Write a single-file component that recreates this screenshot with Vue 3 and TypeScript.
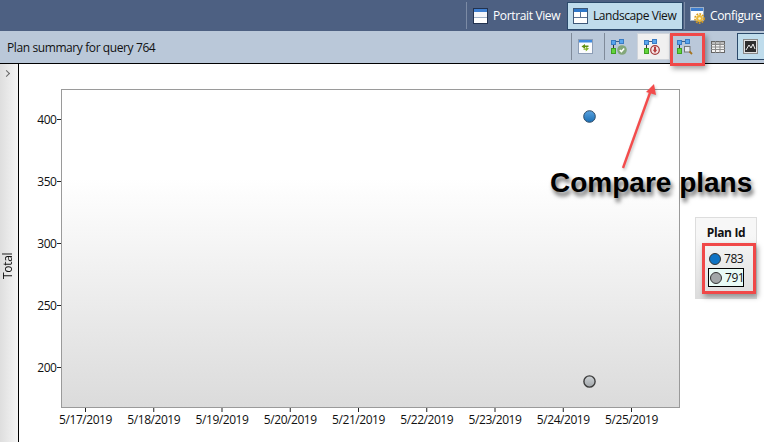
<script setup lang="ts">
const yTicks = [
  { label: '400', y: 119 },
  { label: '350', y: 181 },
  { label: '300', y: 243 },
  { label: '250', y: 305 },
  { label: '200', y: 367 },
]
const days = ['5/17/2019', '5/18/2019', '5/19/2019', '5/20/2019', '5/21/2019', '5/22/2019', '5/23/2019', '5/24/2019', '5/25/2019']
const xTicks = days.map((label, i) => ({ label, x: 85.5 + i * 68.25 }))
</script>

<template>
  <div class="page">
    <div class="window">
      <header class="topbar">
        <span class="sep"></span>
        <button class="tab portrait">
          <svg width="15" height="16" viewBox="0 0 15 16"><rect x="0.5" y="0.5" width="14" height="15" fill="#fff" stroke="#22324f"/><rect x="1" y="1" width="13" height="3" fill="#3f7fd0"/><rect x="1" y="4" width="13" height="5" fill="#f4f6fa"/><line x1="1" y1="9.5" x2="14" y2="9.5" stroke="#9fb0c6"/></svg>
          <span>Portrait View</span>
        </button>
        <button class="tab active">
          <svg width="15" height="16" viewBox="0 0 15 16"><rect x="0.5" y="0.5" width="14" height="15" fill="#fff" stroke="#3e5878"/><rect x="1" y="1" width="13" height="3" fill="#2f78c9"/><line x1="7.5" y1="4" x2="7.5" y2="9" stroke="#5b7393"/><line x1="1" y1="9.5" x2="14" y2="9.5" stroke="#5b7393"/></svg>
          <span>Landscape View</span>
        </button>
        <span class="sep tight"></span>
        <button class="tab config">
          <svg width="15" height="17" viewBox="0 0 15 17"><rect x="0.5" y="0.5" width="13" height="13" fill="#fff" stroke="#9fb0c6"/><rect x="1" y="1" width="12" height="3" fill="#3f7fd0"/><circle cx="9.5" cy="11.5" r="4.6" fill="none" stroke="#d89a1c" stroke-width="1.6" stroke-dasharray="1.8 1.2"/><circle cx="9.5" cy="11.5" r="3.4" fill="#eab83a"/><circle cx="9.5" cy="11.5" r="1.3" fill="#fff6d0"/></svg>
          <span>Configure</span>
        </button>
      </header>

      <div class="subbar">
        <span class="title">Plan summary for query 764</span>
        <div class="tools">
          <span class="toolsep"></span>
          <span class="tool refresh">
            <svg width="15" height="15" viewBox="0 0 15 15"><rect x="0.5" y="0.5" width="14" height="14" fill="#fbfcfe" stroke="#8c9db5"/><rect x="1" y="1" width="13" height="2.5" fill="#3f8adf"/><path d="M3.5 7.5 L7 5 V6.5 H10.5 V8 H7 V9.8 Z" fill="#5d8f12"/><path d="M11 9.5 L7.8 12.4 V10.8 H5.5 V9.4 H7.8 V7.8 Z" fill="#86b52a"/></svg>
          </span>
          <span class="toolsep"></span>
          <span class="tool force">
            <svg width="16" height="16" viewBox="0 0 16 16"><rect x="0.5" y="1.5" width="4" height="4" fill="#58a6ee" stroke="#3a7cc4"/><rect x="8.5" y="0.5" width="4" height="4" fill="#58a6ee" stroke="#3a7cc4"/><path d="M5 2.5H8" stroke="#3a5f8a"/><path d="M2.5 6V9" stroke="#333"/><rect x="0.5" y="9.5" width="4" height="5" fill="#62d43c" stroke="#3fa022"/><circle cx="11" cy="11" r="4.8" fill="#83a77a"/><path d="M8.8 11l1.6 1.6 2.8-3" stroke="#fff" stroke-width="1.5" fill="none"/></svg>
          </span>
          <span class="tool unforce">
            <svg width="16" height="16" viewBox="0 0 16 16"><rect x="0.5" y="1.5" width="4" height="4" fill="#58a6ee" stroke="#3a7cc4"/><rect x="8.5" y="0.5" width="4" height="4" fill="#58a6ee" stroke="#3a7cc4"/><path d="M5 2.5H8" stroke="#3a5f8a"/><path d="M2.5 6V9" stroke="#333"/><rect x="0.5" y="9.5" width="4" height="5" fill="#62d43c" stroke="#3fa022"/><circle cx="11" cy="11" r="4.3" fill="#f6e6e6" stroke="#a23a3a" stroke-width="1.2"/><path d="M10 7.8h2v3h1.2L11 14l-2.2-3.2H10z" fill="#b53c3c"/></svg>
          </span>
          <span class="tool compare">
            <svg width="16" height="16" viewBox="0 0 16 16"><rect x="0.5" y="1.5" width="4" height="4" fill="#58a6ee" stroke="#3a7cc4"/><rect x="8.5" y="0.5" width="4" height="4" fill="#58a6ee" stroke="#3a7cc4"/><path d="M5 2.5H8" stroke="#3a5f8a"/><path d="M2.5 6V9" stroke="#333"/><rect x="0.5" y="9.5" width="4" height="5" fill="#62d43c" stroke="#3fa022"/><rect x="7.5" y="7.5" width="5.5" height="5.5" fill="#e6e9ee" stroke="#777"/><path d="M12.5 12.5l2.5 2.5" stroke="#a5741e" stroke-width="1.8"/></svg>
          </span>
          <span class="tool grid">
            <svg width="14" height="12" viewBox="0 0 14 12"><rect x="0.5" y="0.5" width="13" height="11" fill="#f4f4f4" stroke="#666"/><rect x="1" y="1" width="12" height="2" fill="#bdbdbd"/><path d="M0 3.5H14M0 6H14M0 8.5H14M4.5 0V12M9 0V12" stroke="#8a8a8a"/></svg>
          </span>
          <span class="tool chartbtn">
            <svg width="15" height="15" viewBox="0 0 15 15"><rect x="0.5" y="0.5" width="14" height="14" fill="#e2e2e2" stroke="#8a8a8a"/><rect x="2" y="2" width="11" height="11" fill="#2e2e2e"/><path d="M3 11 L6 6 L8 9 L10 5 L12 10" stroke="#eee" fill="none"/></svg>
          </span>
        </div>
      </div>

      <div class="body">
        <aside class="side">
          <span class="chev"></span>
          <span class="ylabel">Total</span>
        </aside>
        <main class="canvas">
          <svg class="chart" width="746" height="378" viewBox="19 64 746 378">
            <defs>
              <linearGradient id="plot" x1="0" y1="0" x2="0" y2="1">
                <stop offset="0" stop-color="#ffffff"/>
                <stop offset="0.28" stop-color="#ffffff"/>
                <stop offset="1" stop-color="#dbdbdb"/>
              </linearGradient>
              <linearGradient id="dotA" x1="0" y1="0" x2="0" y2="1">
                <stop offset="0" stop-color="#5ba3e0"/>
                <stop offset="1" stop-color="#1a6fb5"/>
              </linearGradient>
              <linearGradient id="dotB" x1="0" y1="0" x2="0" y2="1">
                <stop offset="0" stop-color="#cfd3d6"/>
                <stop offset="1" stop-color="#a0a5a9"/>
              </linearGradient>
            </defs>
            <rect x="61.5" y="89.5" width="618" height="318" fill="url(#plot)" stroke="#9a9a9a"/>
            <g v-for="t in yTicks" :key="t.label">
              <line x1="57" :y1="t.y + 0.5" x2="61" :y2="t.y + 0.5" stroke="#222"/>
              <text class="tick" x="56.5" :y="t.y + 4.5" text-anchor="end">{{ t.label }}</text>
            </g>
            <g v-for="t in xTicks" :key="t.label">
              <line :x1="t.x" y1="408" :x2="t.x" y2="412" stroke="#222"/>
              <text class="tick" :x="t.x" y="423.5" text-anchor="middle">{{ t.label }}</text>
            </g>
            <circle cx="589.5" cy="116.5" r="5.8" fill="url(#dotA)" stroke="#2d4a66"/>
            <circle cx="589.5" cy="381.5" r="5.6" fill="url(#dotB)" stroke="#3c3c3c" stroke-width="1.4"/>
            <g class="arrow">
              <line x1="623" y1="168" x2="651" y2="90" stroke="#f34c4c" stroke-width="2.4"/>
              <path d="M654 84 L656 95 L646 92 Z" fill="#f34c4c"/>
            </g>
          </svg>

          <div class="legend">
            <div class="legend-title">Plan Id</div>
            <div class="legend-row"><span class="ldot blue"></span>783</div>
            <div class="legend-row selected"><span class="ldot gray"></span>791</div>
          </div>
          <div class="red legend-red"></div>
          <div class="callout">Compare plans</div>
        </main>
      </div>
    </div>
    <div class="compare-red red"></div>
  </div>
</template>

<style>
html, body { margin: 0; background: #fff; }
</style>

<style scoped>
.page {
  position: relative;
  width: 779px;
  height: 442px;
  overflow: hidden;
  background: #fff;
  font-family: "Open Sans", "Noto Sans", sans-serif;
  font-size: 12px;
  color: #111;
}
.window { width: 764px; height: 442px; display: flex; flex-direction: column; overflow: hidden; }
.topbar {
  height: 31px;
  flex: none;
  background: #4d6082;
  display: flex;
  align-items: center;
  justify-content: flex-end;
  overflow: hidden;
}
.sep { width: 1px; height: 27px; background: #7c8ba5; margin-right: 6px; flex: none; }
.sep.tight { margin: 0 5px 0 1px; }
.tab {
  all: unset;
  display: flex;
  align-items: center;
  gap: 5px;
  height: 28px;
  box-sizing: border-box;
  color: #fff;
  font-size: 12px;
  letter-spacing: -0.36px;
  white-space: nowrap;
  flex: none;
}
.tab.portrait { width: 94px; }
.tab.active {
  width: 116px;
  background: #bfdcec;
  color: #111;
  border: 1px solid #2b4a6b;
  padding-left: 5px;
  letter-spacing: -0.42px;
}
.tab.config { width: 74px; }
.subbar {
  height: 33px;
  flex: none;
  box-sizing: border-box;
  background: #bac8d9;
  border-bottom: 1px solid #000;
  display: flex;
  align-items: center;
  justify-content: space-between;
  padding-left: 7px;
}
.title { font-size: 12px; letter-spacing: -0.4px; }
.tools { display: flex; align-items: flex-start; height: 32px; padding-top: 2px; box-sizing: border-box; }
.toolsep { width: 1px; height: 27px; background: #7f8a99; }
.tool { display: flex; align-items: center; height: 27px; box-sizing: border-box; padding-left: 6px; }
.refresh { width: 32px; }
.force { width: 32px; }
.unforce { width: 33px; background: #f0f0f0; border: 1px solid #cfd4db; }
.compare { width: 35px; padding-left: 7px; }
.grid { width: 32px; }
.chartbtn { width: 27px; background: #bfdcec; border: 1px solid #2b4a6b; border-right: 0; padding-left: 5px; }
.body { flex: 1; display: flex; min-height: 0; }
.side {
  width: 18px;
  flex: none;
  background: linear-gradient(to right, #dedede, #f5f5f5);
  border-right: 1px solid #000;
  position: relative;
}
.chev {
  position: absolute;
  left: 4px;
  top: 7px;
  width: 4px;
  height: 4px;
  border-top: 1.5px solid #666;
  border-right: 1.5px solid #666;
  transform: rotate(45deg);
}
.ylabel {
  position: absolute;
  left: 0;
  width: 16px;
  top: 189px;
  height: 26px;
  writing-mode: vertical-rl;
  transform: rotate(180deg);
  display: flex;
  align-items: center;
  justify-content: center;
  letter-spacing: -0.3px;
  line-height: 16px;
}
.canvas { position: relative; flex: 1; min-width: 0; background: #fff; }
.chart { display: block; position: absolute; left: 0; top: 0; }
.arrow { filter: drop-shadow(1px 2px 1.5px rgba(0,0,0,.25)); }
.tick { font-family: "Open Sans", "Noto Sans", sans-serif; font-size: 12px; fill: #111; letter-spacing: -0.45px; }
.legend {
  position: absolute;
  left: 676px;
  top: 153px;
  width: 62px;
  height: 82px;
  box-sizing: border-box;
  border: 1px solid #ddd;
  border-bottom: 0;
  background: linear-gradient(#f7f7f7 20%, #dcdcdc);
  display: flex;
  flex-direction: column;
  align-items: flex-start;
}
.legend-title { width: 100%; text-align: center; font-weight: 700; font-size: 12px; letter-spacing: -0.35px; margin: 7px 0 9px; line-height: 15px; }
.legend-row {
  display: flex;
  align-items: center;
  gap: 3px;
  margin-left: 12px;
  height: 19px;
  box-sizing: border-box;
  padding-left: 1px;
  letter-spacing: -0.45px;
}
.legend-row.selected { width: 36px; border: 1px solid #000; background: #e9fbf6; }
.ldot { width: 10px; height: 10px; border-radius: 50%; border: 1px solid #333; flex: none; }
.ldot.blue { background: #0f73c4; }
.ldot.gray { background: #a2a6a8; }
.red { position: absolute; box-sizing: border-box; border: 3px solid #f04848; box-shadow: 2px 3px 5px rgba(0,0,0,.35); pointer-events: none; }
.legend-red { left: 683px; top: 179px; width: 54px; height: 51px; }
.compare-red { left: 670px; top: 33px; width: 35px; height: 33px; }
.callout {
  position: absolute;
  left: 531px;
  top: 103px;
  font-family: "Liberation Sans", Arial, sans-serif;
  font-weight: 700;
  font-size: 28px;
  line-height: 32px;
  color: #000;
  white-space: nowrap;
  text-shadow: 2px 4px 4px rgba(0,0,0,.6);
}
</style>
